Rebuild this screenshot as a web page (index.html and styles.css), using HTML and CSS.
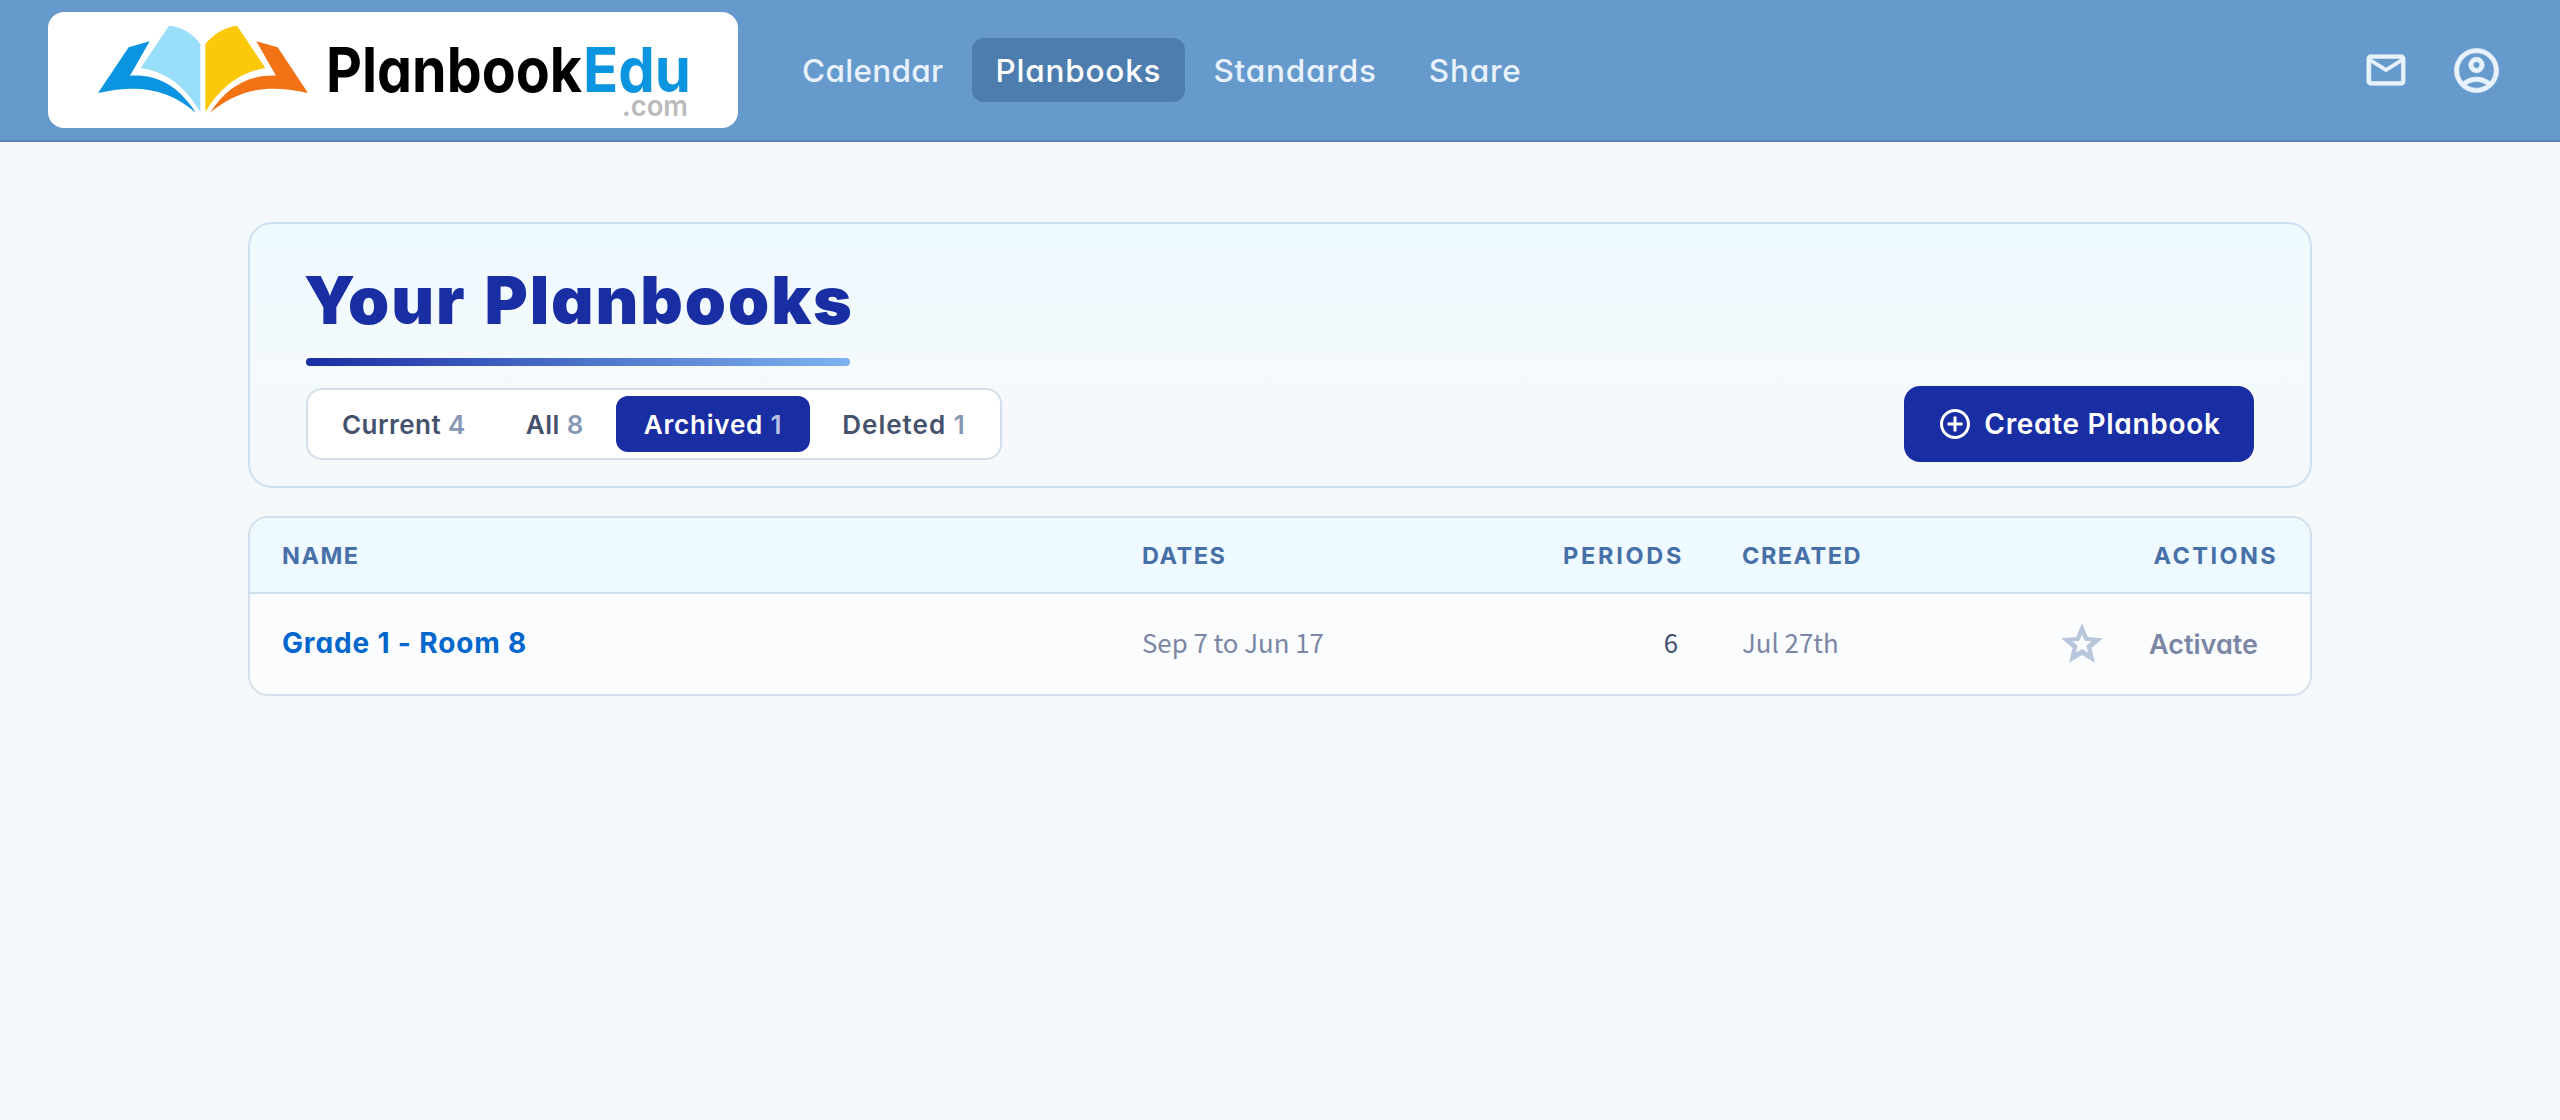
FILE: index.html
```
<!DOCTYPE html>
<html lang="en">

<head>
  <meta charset="UTF-8" />
  <title>Your Planbooks - PlanbookEdu</title>
  <link rel="stylesheet" href="styles.css">
</head>

<body>
  <header class="header">
    <a class="logo" href="#">
      <svg width="690" height="116" viewBox="0 0 690 116">
        <g transform="translate(32 -2) scale(0.33333)">
          <path fill="#0b94df" d="M54 249L146 112L209 94L150 197C230 193 290 222 348 308C262 236 178 222 54 249Z" />
          <path fill="#9adffa" d="M267 47C304 50 336 68 361 102V306C312 224 254 184 182 174Z" />
          <path fill="#fcc80a" d="M471 47C434 52 402 70 376 102V306C420 232 480 186 556 174Z" />
          <path fill="#f47216" d="M684 249L593 112L529 94L588 197C508 194 444 226 390 308C478 236 562 222 684 249Z" />
        </g>
        <text class="logo-name" x="278" y="80" textLength="256" lengthAdjust="spacingAndGlyphs">Planbook</text>
        <text class="logo-name logo-edu" x="535" y="80" textLength="108" lengthAdjust="spacingAndGlyphs">Edu</text>
        <text class="logo-com" x="574" y="104" textLength="66" lengthAdjust="spacingAndGlyphs">.com</text>
      </svg>
    </a>
    <nav class="nav">
      <a class="nav-calendar" href="#">Calendar</a>
      <a class="nav-planbooks active" href="#">Planbooks</a>
      <a class="nav-standards" href="#">Standards</a>
      <a class="nav-share" href="#">Share</a>
    </nav>
    <div class="header-icons">
      <svg class="icon-mail" viewBox="0 0 24 24"><path d="M4 20q-.825 0-1.412-.587T2 18V6q0-.825.588-1.412T4 4h16q.825 0 1.413.588T22 6v12q0 .825-.587 1.413T20 20zm8-7L4 8v10h16V8zm0-2l8-5H4zM4 8V6v12z" /></svg>
      <svg class="icon-account" viewBox="0 0 24 24"><path d="M5.85 17.1q1.275-.975 2.85-1.537T12 15t3.300.563 2.850 1.537q.875-1.025 1.363-2.325T20 12q0-3.325-2.337-5.662T12 4 6.338 6.338 4 12q0 1.475.488 2.775T5.850 17.100M12 13q-1.475 0-2.487-1.012T8.500 9.500t1.013-2.487T12 6t2.488 1.013T15.500 9.500t-1.012 2.488T12 13m0 9q-2.075 0-3.900-.788t-3.175-2.137-2.137-3.175T2 12t.788-3.900 2.137-3.175T8.100 2.788 12 2t3.900.788 3.175 2.137T21.213 8.100 22 12t-.788 3.900-2.137 3.175-3.175 2.138T12 22m0-2q1.325 0 2.500-.387t2.150-1.113q-.975-.725-2.150-1.112T12 17t-2.500.388T7.350 18.500q.975.725 2.150 1.113T12 20m0-9q.65 0 1.075-.425T13.500 9.500t-.425-1.075T12 8t-1.075.425T10.500 9.500t.425 1.075T12 11" /></svg>
    </div>
  </header>

  <main class="content">
    <section class="panel">
      <h1>Your Planbooks</h1>
      <div class="panel-row">
        <div class="filters">
          <button class="filter-current">Current <span>4</span></button>
          <button class="filter-all">All <span>8</span></button>
          <button class="filter-archived active">Archived <span>1</span></button>
          <button class="filter-deleted">Deleted <span>1</span></button>
        </div>
        <button class="create-button">
          <svg viewBox="0 0 24 24"><path d="M11 17h2v-4h4v-2h-4V7h-2v4H7v2h4zm1 5C6.480 22 2 17.520 2 12S6.480 2 12 2s10 4.480 10 10-4.480 10-10 10zm0-2c4.420 0 8-3.580 8-8s-3.580-8-8-8-8 3.580-8 8 3.580 8 8 8z" /></svg>
          <span>Create Planbook</span>
        </button>
      </div>
    </section>

    <div class="table-card">
      <table>
        <thead>
          <tr>
            <th class="col-name">Name</th>
            <th class="col-dates">Dates</th>
            <th class="col-periods">Periods</th>
            <th class="col-created">Created</th>
            <th class="col-actions">Actions</th>
          </tr>
        </thead>
        <tbody>
          <tr>
            <td><a class="planbook-link" href="#">Grade 1 - Room 8</a></td>
            <td>Sep 7 to Jun 17</td>
            <td class="periods">6</td>
            <td>Jul 27th</td>
            <td class="actions-cell">
              <div class="actions">
                <svg class="star" viewBox="0 0 24 24"><path fill-rule="evenodd" d="M22 9.240l-7.190-.620L12 2 9.190 8.630 2 9.240l5.460 4.730L5.820 21 12 17.270 18.180 21l-1.630-7.030zM12 7.400l1.300 3 3.300.3-2.500 2.100.8 3.300L12 14.400l-2.900 1.700.8-3.300-2.500-2.100 3.300-.3z" /></svg>
                <button class="activate">Activate</button>
              </div>
            </td>
          </tr>
        </tbody>
      </table>
    </div>
  </main>
</body>

</html>
```
FILE: styles.css
```
* {
  box-sizing: border-box;
}

body {
  margin: 0;
  background: #f5f9fc;
  font-family: 'Inter', sans-serif;
  font-feature-settings: 'cv11';
}

a {
  text-decoration: none;
}

button {
  border: none;
  background: none;
  padding: 0;
  font-family: inherit;
  font-feature-settings: inherit;
  white-space: nowrap;
  cursor: pointer;
}

.header {
  display: flex;
  align-items: center;
  height: 142px;
  padding: 0 48px;
  background: #6699cc;
  border-bottom: 2px solid #5584b8;
}

.logo {
  width: 690px;
  height: 116px;
  background: #fff;
  border-radius: 16px;
}

.logo svg {
  display: block;
}

.logo-name {
  font-size: 62px;
  font-weight: 700;
}

.logo-edu {
  fill: #0b94df;
}

.logo-com {
  font-size: 29px;
  font-weight: 600;
  fill: #bbb;
}

.nav {
  display: flex;
  gap: 4px;
  margin-left: 40px;
}

.nav a {
  height: 64px;
  padding: 0 24px;
  border-radius: 12px;
  color: #e8f2fc;
  font-size: 31.5px;
  font-weight: 500;
  line-height: 65px;
  letter-spacing: 0.8px;
}

.nav .nav-calendar {
  letter-spacing: 0.3px;
}

.nav a.active {
  background: #4d7cae;
  color: #fff;
}

.header-icons {
  display: flex;
  align-items: center;
  gap: 41px;
  margin-left: auto;
  margin-right: 9px;
  fill: #e8f2fc;
  stroke: #e8f2fc;
  stroke-width: 0.3px;
}

.icon-mail {
  width: 46px;
  height: 46px;
}

.icon-account {
  width: 53px;
  height: 53px;
}

.content {
  width: 2064px;
  margin: 80px auto 0;
}

.panel {
  height: 266px;
  padding: 36px 56px 0;
  border: 2px solid #cee0f0;
  border-radius: 24px;
  background: linear-gradient(180deg, #eefaff 0%, #f5f9fc 70%);
}

h1 {
  position: relative;
  width: 544px;
  height: 106px;
  margin: 0;
  color: #1a2ea4;
  font-size: 66px;
  font-weight: 900;
  line-height: 80px;
  letter-spacing: 1.9px;
  word-spacing: 3px;
  text-indent: -2px;
  white-space: nowrap;
}

h1::after {
  content: '';
  position: absolute;
  left: 0;
  bottom: 0;
  width: 100%;
  height: 8px;
  border-radius: 4px;
  background: linear-gradient(90deg, #1a2ea4, #7db3ee);
}

.panel-row {
  display: flex;
  justify-content: space-between;
  align-items: center;
  height: 76px;
  margin-top: 20px;
}

.filters {
  display: flex;
  gap: 4px;
  height: 72px;
  padding: 6px;
  border: 2px solid #d3dfec;
  border-radius: 16px;
  background: #fff;
}

.filters button {
  height: 56px;
  padding: 0 28px;
  border-radius: 12px;
  color: #44526d;
  font-size: 26px;
  font-weight: 600;
  letter-spacing: 0.6px;
}

.filters .filter-current,
.filters .filter-all {
  letter-spacing: 0.45px;
}

.filters .filter-archived {
  letter-spacing: 0.8px;
}

.filters .filter-deleted {
  letter-spacing: 1px;
}

.filters span {
  color: #8698b4;
}

.filters .active {
  background: #1a2ea4;
  color: #fff;
}

.filters .active span {
  color: #bac0e4;
}

.create-button {
  display: flex;
  justify-content: center;
  align-items: center;
  gap: 11px;
  width: 350px;
  height: 76px;
  border-radius: 16px;
  background: #1a2ea4;
  color: #fff;
  font-size: 28px;
  font-weight: 600;
  letter-spacing: 0.7px;
}

.create-button svg {
  width: 36px;
  height: 36px;
  fill: #fff;
}

.table-card {
  margin-top: 28px;
  border: 2px solid #d3dfec;
  border-radius: 20px;
  background: #fafcfe;
  overflow: hidden;
}

table {
  width: 100%;
  table-layout: fixed;
  border-collapse: separate;
  border-spacing: 0;
}

th {
  height: 76px;
  padding: 0 32px;
  border-bottom: 2px solid #cee0ee;
  background: #eefaff;
  color: #4870a8;
  font-size: 23.5px;
  font-weight: 700;
  letter-spacing: 1.5px;
  text-align: left;
  text-transform: uppercase;
}

td {
  height: 100px;
  padding: 0 32px 5px;
  color: #7a86a4;
  font-family: 'Noto Sans CJK SC', sans-serif;
  font-size: 25.8px;
}

.col-name {
  width: 860px;
}

.col-dates {
  width: 400px;
}

.col-periods {
  width: 200px;
  padding-right: 26px;
  letter-spacing: 2.7px;
  text-align: right;
}

.col-created {
  width: 270px;
}

.col-actions {
  letter-spacing: 2.4px;
  text-align: right;
}

.periods {
  color: #44526d;
  text-align: right;
}

.planbook-link {
  color: #0066cc;
  font-family: 'Inter', sans-serif;
  font-size: 28px;
  font-weight: 700;
  letter-spacing: 0.85px;
}

.actions-cell {
  padding-bottom: 0;
}

.actions {
  display: flex;
  justify-content: flex-end;
  align-items: center;
}

.star {
  width: 50px;
  height: 50px;
  fill: #b8c6dc;
}

.activate {
  margin: 0 20px 0 42px;
  color: #7a86a4;
  font-family: 'Inter', sans-serif;
  font-size: 27px;
  font-weight: 600;
}
```
